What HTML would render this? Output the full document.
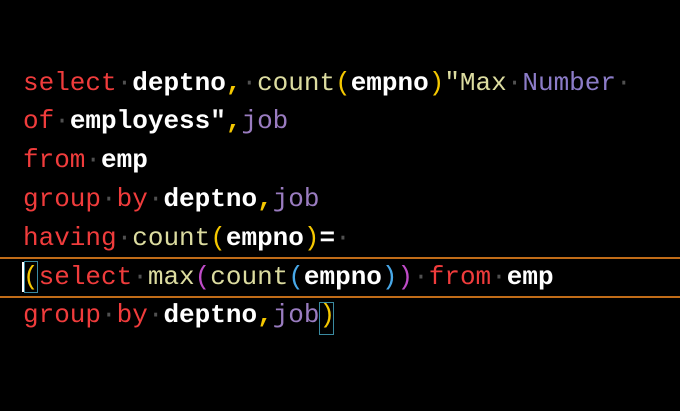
<!DOCTYPE html>
<html><head><style>
html,body{margin:0;background:#000;width:680px;height:411px;overflow:hidden}
.l{position:absolute;left:23px;height:38.8px;line-height:38.8px;font-family:"Liberation Mono",monospace;font-size:26px;white-space:pre;color:#fff;font-weight:bold}
.k{color:#f03c3c;font-weight:normal}
.f{color:#dcdca0;font-weight:normal}
.p{color:#f5c800;font-weight:normal}
.c{color:#f5c800}
.j{color:#9a7cc0;font-weight:normal}
.s{color:#dcdca0;font-weight:normal}
.n{color:#8c7cc8;font-weight:normal}
.d{color:#505050;font-weight:normal}
.m{color:#c04cc8;font-weight:normal}
.b{color:#48a8e8;font-weight:normal}
.cur{position:absolute;left:0;width:680px;top:257px;height:37px;border-top:2px solid #c06c18;border-bottom:2px solid #c06c18}
.box{position:absolute;border:1.5px solid #3a8aa0}
</style></head><body>
<div class="cur"></div>
<div style="position:absolute;left:22px;top:262px;width:3px;height:30px;background:#fff"></div>
<div class="box" style="left:24px;top:261px;width:12px;height:30px"></div>
<div class="box" style="left:319px;top:302px;width:13px;height:31px"></div>
<div class="l" style="top:63.6px"><span class="k">select</span><span class="d">·</span>deptno<span class="c">,</span><span class="d">·</span><span class="f">count</span><span class="p">(</span>empno<span class="p">)</span><span class="s">"Max</span><span class="d">·</span><span class="n">Number</span><span class="d">·</span></div>
<div class="l" style="top:102.4px"><span class="k">of</span><span class="d">·</span>employess"<span class="c">,</span><span class="j">job</span></div>
<div class="l" style="top:141.2px"><span class="k">from</span><span class="d">·</span>emp</div>
<div class="l" style="top:180px"><span class="k">group</span><span class="d">·</span><span class="k">by</span><span class="d">·</span>deptno<span class="c">,</span><span class="j">job</span></div>
<div class="l" style="top:218.8px"><span class="k">having</span><span class="d">·</span><span class="f">count</span><span class="p">(</span>empno<span class="p">)</span>=<span class="d">·</span></div>
<div class="l" style="top:257.6px"><span class="p">(</span><span class="k">select</span><span class="d">·</span><span class="f">max</span><span class="m">(</span><span class="f">count</span><span class="b">(</span>empno<span class="b">)</span><span class="m">)</span><span class="d">·</span><span class="k">from</span><span class="d">·</span>emp</div>
<div class="l" style="top:296.4px"><span class="k">group</span><span class="d">·</span><span class="k">by</span><span class="d">·</span>deptno<span class="c">,</span><span class="j">job</span><span class="p">)</span></div>
</body></html>
